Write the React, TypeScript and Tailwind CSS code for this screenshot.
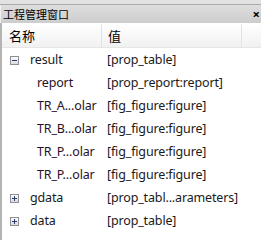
import React from "react";

const Box = ({ open }: { open: boolean }) => (
  <svg width="9" height="9" viewBox="0 0 9 9" className="block">
    <defs>
      <linearGradient id={open ? "gm" : "gp"} x1="0" y1="0" x2="0" y2="1">
        <stop offset="0" stopColor="#ffffff" />
        <stop offset="1" stopColor="#d8d8d8" />
      </linearGradient>
    </defs>
    <rect x="0.5" y="0.5" width="8" height="8" fill={`url(#${open ? "gm" : "gp"})`} stroke="#8f8f9a" />
    <rect x="2" y="4" width="5" height="1" fill="#2c3a6a" />
    {!open && <rect x="4" y="2" width="1" height="5" fill="#2c3a6a" />}
  </svg>
);

type Row = { name: string; value: string; level: 0 | 1; box?: "open" | "closed" };

const rows: Row[] = [
  { name: "result", value: "[prop_table]", level: 0, box: "open" },
  { name: "report", value: "[prop_report:report]", level: 1 },
  { name: "TR_A...olar", value: "[fig_figure:figure]", level: 1 },
  { name: "TR_B...olar", value: "[fig_figure:figure]", level: 1 },
  { name: "TR_P...olar", value: "[fig_figure:figure]", level: 1 },
  { name: "TR_P...olar", value: "[fig_figure:figure]", level: 1 },
  { name: "gdata", value: "[prop_tabl...arameters]", level: 0, box: "closed" },
  { name: "data", value: "[prop_table]", level: 0, box: "closed" },
];

export default function App() {
  return (
    <div
      className="w-[261px] h-[240px] bg-white overflow-hidden flex flex-col"
      style={{ fontFamily: '"Noto Sans", "Noto Sans CJK SC", sans-serif' }}
    >
      <div className="h-[4px] bg-[#e2e2e2] border-b border-[#a9a9a9] box-content" />
      <div className="h-[18px] bg-gradient-to-b from-[#dedede] to-[#cdcdcd] border-l border-[#f0f0f0] flex items-center justify-between pl-[2px] pr-[1px]">
        <span className="text-[11px] leading-none text-black" style={{ fontFamily: '"Noto Sans CJK SC", sans-serif' }}>
          工程管理窗口
        </span>
        <span className="text-[13px] leading-none font-bold text-black">×</span>
      </div>
      <div className="flex-1 flex flex-col border-l-2 border-[#b4b4b4]">
        <div className="h-[25px] flex bg-gradient-to-b from-[#ffffff] to-[#f1f1f1] border-b border-[#e6e6e6] border-t border-t-white">
          <div className="w-[100px] border-r border-[#e2e2e2] flex items-center pl-[7px] text-[13px] text-black" style={{ fontFamily: '"Noto Sans CJK SC", sans-serif' }}>
            名称
          </div>
          <div className="w-[140px] border-r border-[#e2e2e2] flex items-center pl-[6px] text-[13px] text-black" style={{ fontFamily: '"Noto Sans CJK SC", sans-serif' }}>
            值
          </div>
          <div className="flex-1" />
        </div>
        <div className="pt-[1px] flex flex-col">
          {rows.map((r, i) => (
            <div key={i} className="h-[23px] flex items-center text-[12.5px] tracking-[-0.15px] text-[#1a1a1a]">
              <div className="w-[105px] flex items-center">
                {r.level === 0 ? (
                  <>
                    <div className="w-[8px]" />
                    <Box open={r.box === "open"} />
                    <span className="ml-[11px]">{r.name}</span>
                  </>
                ) : (
                  <span className="ml-[35px] text-[#2a0f26]">{r.name}</span>
                )}
              </div>
              <span>{r.value}</span>
            </div>
          ))}
        </div>
      </div>
    </div>
  );
}
